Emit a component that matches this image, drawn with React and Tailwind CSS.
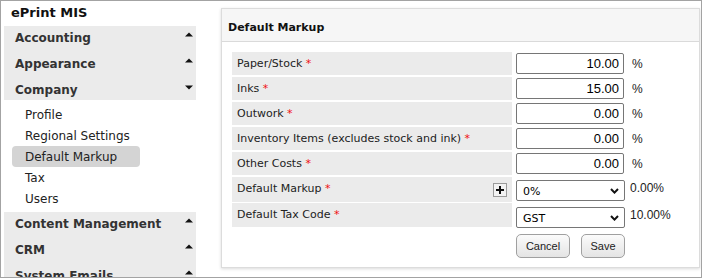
import React from "react";

const Up = () => (
  <svg width="8" height="5" viewBox="0 0 8 5" className="mt-[6px] shrink-0">
    <polygon points="0,4.6 4,0.4 8,4.6" fill="#111" />
  </svg>
);
const Down = () => (
  <svg width="8" height="5" viewBox="0 0 8 5" className="mt-[7px] shrink-0">
    <polygon points="0,0.4 4,4.6 8,0.4" fill="#111" />
  </svg>
);

function Section({ label, open, h = "h-[26px]" }) {
  return (
    <div className={`flex shrink-0 justify-between bg-[#ebebeb] pl-[11px] pr-[3px] ${h}`}>
      <span className="mt-[5px] text-[12px] leading-[14px] font-bold text-[#333] whitespace-nowrap">{label}</span>
      {open ? <Down /> : <Up />}
    </div>
  );
}

function SubItem({ label, active }) {
  return (
    <div
      className={`ml-[8px] w-[128px] h-[21px] shrink-0 pl-[13px] pt-[2px] text-[12px] leading-[19px] text-[#222] rounded-[4px] ${
        active ? "bg-[#d4d4d4]" : ""
      }`}
    >
      {label}
    </div>
  );
}

const Star = () => <span className="text-[#f01010]"> *</span>;

function Label({ children, h = "h-[23px]", extra }) {
  return (
    <div className={`w-[280px] ${h} bg-[#ebebeb] flex justify-between items-start pl-[5px] pr-[5px]`}>
      <span className="mt-[5px] text-[11px] leading-[13px] text-[#222] whitespace-nowrap">{children}</span>
      {extra}
    </div>
  );
}

function NumRow({ label, value }) {
  return (
    <div className="flex items-start">
      <Label>
        {label}
        <Star />
      </Label>
      <div className="ml-[4px] mt-[1px] w-[108px] h-[21px] border border-[#767676] rounded-[2px] bg-white text-right pr-[4px] font-['Liberation_Sans',sans-serif] text-[13px] leading-[19px] text-black">
        {value}
      </div>
      <span className="ml-[8px] mt-[5px] font-['Liberation_Sans',sans-serif] text-[12px] leading-[14px] text-[#222]">%</span>
    </div>
  );
}

const Chevron = () => (
  <svg width="9" height="6" viewBox="0 0 9 6" className="shrink-0">
    <polyline points="1,1 4.5,4.6 8,1" fill="none" stroke="#111" strokeWidth="2" />
  </svg>
);

function SelectRow({ label, value, note, h, extra, selMt, noteMt }) {
  return (
    <div className="flex items-start">
      <Label h={h} extra={extra}>
        {label}
        <Star />
      </Label>
      <div
        className={`ml-[4px] ${selMt} w-[109px] h-[21px] border border-[#767676] rounded-[2px] bg-white flex items-center justify-between pl-[6px] pr-[5px]`}
      >
        <span className="text-[11px] leading-[13px] mt-[2px] text-black">{value}</span>
        <Chevron />
      </div>
      <span className={`ml-[5px] ${noteMt} font-['Liberation_Sans',sans-serif] text-[12px] leading-[14px] text-[#222]`}>
        {note}
      </span>
    </div>
  );
}

const PlusBox = () => (
  <div className="mt-[6px] w-[14px] h-[14px] border border-[#9a9a9a] bg-[#f2f2f2] flex items-center justify-center">
    <svg width="8" height="8" viewBox="0 0 8 8">
      <rect x="3" y="0" width="2" height="8" fill="#111" />
      <rect x="0" y="3" width="8" height="2" fill="#111" />
    </svg>
  </div>
);

export default function App() {
  return (
    <div className="w-[702px] h-[278px] border border-[#a3a3a3] bg-white flex overflow-hidden font-['DejaVu_Sans',sans-serif]">
      <div className="w-[196px] shrink-0 pl-[3px] pr-[1px] flex flex-col overflow-hidden">
        <div className="h-[25px] shrink-0 pl-[7px] pt-[4px] text-[13px] leading-[15px] font-bold text-[#111]">ePrint MIS</div>
        <Section label="Accounting" />
        <Section label="Appearance" />
        <Section label="Company" open h="h-[22px]" />
        <div className="pt-[4px] pb-[3px] flex flex-col shrink-0">
          <SubItem label="Profile" />
          <SubItem label="Regional Settings" />
          <SubItem label="Default Markup" active />
          <SubItem label="Tax" />
          <SubItem label="Users" />
        </div>
        <Section label="Content Management" />
        <Section label="CRM" />
        <Section label="System Emails" />
      </div>
      <div className="flex-1 pl-[24px] pr-[1px] pt-[7px] pb-[9px] flex">
        <div className="flex-1 bg-white border border-[#dcdcdc] shadow-[0_1px_3px_rgba(0,0,0,0.15)] flex flex-col">
          <div className="h-[33px] shrink-0 bg-[#f6f6f6] border-b border-[#dadada] pl-[6px] pt-[12px] text-[11px] leading-[13px] font-bold text-[#111]">
            Default Markup
          </div>
          <div className="pl-[10px] pt-[10px] flex flex-col">
            <div className="flex flex-col gap-[2px]">
              <NumRow label="Paper/Stock" value="10.00" />
              <NumRow label="Inks" value="15.00" />
              <NumRow label="Outwork" value="0.00" />
              <NumRow label="Inventory Items (excludes stock and ink)" value="0.00" />
              <NumRow label="Other Costs" value="0.00" />
              <SelectRow
                label="Default Markup"
                value="0%"
                note="0.00%"
                h="h-[25px]"
                extra={<PlusBox />}
                selMt="mt-[3px]"
                noteMt="mt-[4px]"
              />
            </div>
            <div className="mt-[1px]">
              <SelectRow
                label="Default Tax Code"
                value="GST"
                note="10.00%"
                h="h-[24px]"
                selMt="mt-[4px]"
                noteMt="mt-[5px]"
              />
            </div>
            <div className="flex gap-[11px] ml-[284px] mt-[6px]">
              <button className="w-[54px] h-[24px] rounded-[5px] border border-[#a0a0a0] bg-gradient-to-b from-[#fbfbfb] to-[#e4e4e4] font-['Liberation_Sans',sans-serif] text-[11px] text-[#222]">
                Cancel
              </button>
              <button className="w-[44px] h-[24px] rounded-[5px] border border-[#a0a0a0] bg-gradient-to-b from-[#fbfbfb] to-[#e4e4e4] font-['Liberation_Sans',sans-serif] text-[11px] text-[#222]">
                Save
              </button>
            </div>
          </div>
        </div>
      </div>
    </div>
  );
}
